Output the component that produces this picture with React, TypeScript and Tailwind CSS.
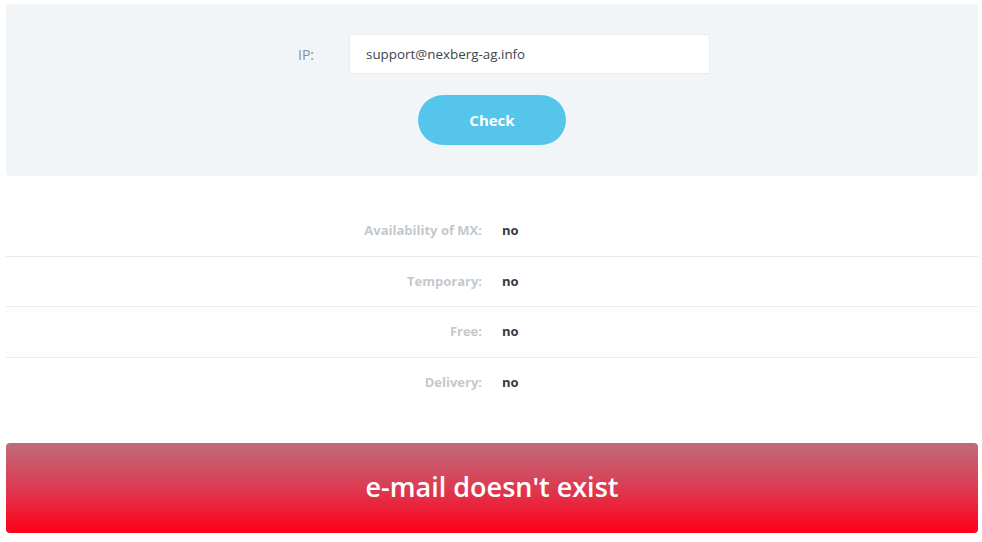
import React from "react";

const rows = [
  { label: "Availability of MX:", value: "no" },
  { label: "Temporary:", value: "no" },
  { label: "Free:", value: "no" },
  { label: "Delivery:", value: "no" },
];

export default function App() {
  return (
    <div className="w-[982px] h-[542px] bg-white pl-[6px] pr-[4px] pt-[4px]" style={{ fontFamily: "'Open Sans', sans-serif" }}>
      <div className="h-[172px] rounded-[4px] bg-[#f2f5f7] flex flex-col pt-[30px]">
        <div className="flex items-center pl-[292px]">
          <span className="w-[51px] text-[14px] text-[#8d8f93]">IP:</span>
          <div className="w-[361px] h-[40px] bg-white border border-[#e8ecef] rounded-[2px] flex items-center pl-[16px] text-[13.4px] text-[#40454c]">
            support@nexberg-ag.info
          </div>
        </div>
        <div className="flex justify-center">
          <button className="mt-[21px] w-[148px] h-[50px] rounded-full bg-[#55c5ec] text-white text-[15px] font-bold">
            Check
          </button>
        </div>
      </div>
      <div className="mt-[30px]">
        {rows.map((r, i) => (
          <div
            key={r.label}
            className={`flex h-[50.5px] items-center ${i < rows.length - 1 ? "border-b border-[#e9ebed]" : ""}`}
          >
            <div className="w-1/2 pr-[10px] text-right text-[13px] font-bold text-[#c4c8cd]">{r.label}</div>
            <div className="w-1/2 pl-[10px] text-[13px] font-bold text-[#343840]">{r.value}</div>
          </div>
        ))}
      </div>
      <div className="mt-[35px] h-[90px] rounded-[4px] bg-linear-to-b/srgb from-[#be6d79] via-[#dc3a52] to-[#ff0018] flex items-center justify-center text-white text-[27px] font-semibold pb-[2px]">
        e-mail doesn't exist
      </div>
    </div>
  );
}
